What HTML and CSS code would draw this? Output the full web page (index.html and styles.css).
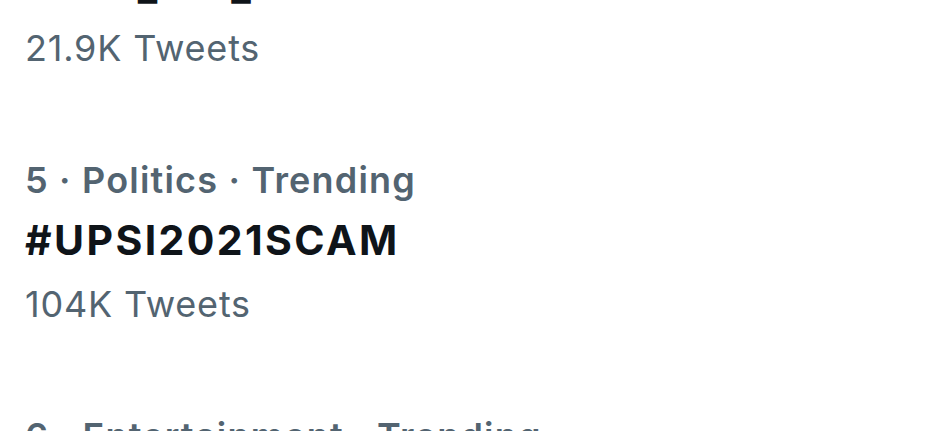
FILE: index.html
```html
<!DOCTYPE html>
<html lang="en">
<head>
<meta charset="utf-8">
<title>Trending</title>
<link rel="stylesheet" href="styles.css">
</head>
<body>
<main class="trends">
  <section class="trend">
    <div class="trend-meta">4 · Politics · Trending</div>
    <div class="trend-name">#Ban_PM_SDPI</div>
    <div class="trend-count">21.9K Tweets</div>
  </section>
  <section class="trend">
    <div class="trend-meta">5 · Politics · Trending</div>
    <div class="trend-name">#UPSI2021SCAM</div>
    <div class="trend-count">104K Tweets</div>
  </section>
  <section class="trend">
    <div class="trend-meta">6 · Entertainment · Trending</div>
    <div class="trend-name">#Trending</div>
    <div class="trend-count">12K Tweets</div>
  </section>
</main>
</body>
</html>
```
FILE: styles.css
```css
html, body {
  margin: 0;
  padding: 0;
  background: #ffffff;
  overflow: hidden;
}

body {
  font-family: Inter, "Liberation Sans", sans-serif;
  width: 935px;
  height: 431px;
}

.trends {
  display: flex;
  flex-direction: column;
  margin-top: -142px;
}

.trend {
  display: flex;
  flex-direction: column;
  padding: 44px 25px 44px;
}

.trend-meta {
  font-size: 36px;
  line-height: 44px;
  font-weight: 600;
  letter-spacing: 1.2px;
  color: #536471;
  margin-bottom: 12.5px;
  white-space: nowrap;
}

.trend-name {
  font-size: 41px;
  line-height: 50px;
  font-weight: 700;
  letter-spacing: 2.4px;
  color: #0f1419;
  white-space: nowrap;
}

.trend-count {
  font-size: 36px;
  line-height: 44px;
  font-weight: 400;
  letter-spacing: 0.8px;
  color: #536471;
  margin-top: 17.5px;
  white-space: nowrap;
}
```
